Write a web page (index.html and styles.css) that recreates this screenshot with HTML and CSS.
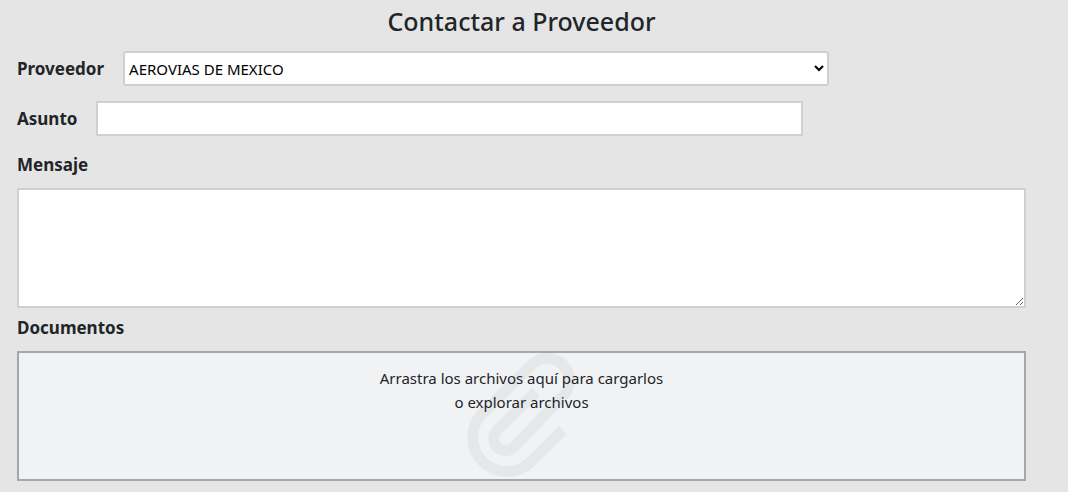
FILE: index.html
```
<!DOCTYPE html>
<html lang="es">
<head>
<meta charset="utf-8">
<meta name="viewport" content="width=device-width, initial-scale=1">
<title>Contactar a Proveedor</title>
<link rel="stylesheet" href="styles.css">
</head>
<body>
<form class="contact">
  <h1 class="title">Contactar a Proveedor</h1>
  <div class="row">
    <label class="label" for="supplier">Proveedor</label>
    <select class="control select" id="supplier"><option>AEROVIAS DE MEXICO</option></select>
  </div>
  <div class="row">
    <label class="label" for="subject">Asunto</label>
    <input class="control" id="subject" type="text">
  </div>
  <div class="block">
    <label class="label" for="message">Mensaje</label>
    <textarea class="message" id="message"></textarea>
  </div>
  <div class="block">
    <label class="label" for="files">Documentos</label>
    <div class="dropzone">
      <svg class="clip" viewBox="0 0 112 126" aria-hidden="true">
        <path d="M97 77 63.500 110A34.200 34.200 0 0 1 15 62L65.500 12A21.800 21.800 0 0 1 97 43L48 94A11.700 11.700 0 0 1 31 77.500L70 39" fill="none" stroke="#e6e7e9" stroke-width="11"/>
      </svg>
      <span class="hint">Arrastra los archivos aquí para cargarlos<br>o explorar archivos</span>
      <input class="file" id="files" type="file" multiple>
    </div>
  </div>
</form>
</body>
</html>
```
FILE: styles.css
```
* { box-sizing: border-box; }
body { margin: 0; background: #e5e5e5; color: #212529; font: 15px/24px "Noto Sans", "Open Sans", sans-serif; }
.contact { display: flex; flex-direction: column; margin: 0 42px 0 17px; padding-top: 7px; }
.title { margin: 0 0 16px; font-size: 25px; line-height: 28px; font-weight: 500; text-align: center; }
.row { display: flex; align-items: center; gap: 19px; margin-bottom: 15px; }
.label { font-size: 17px; line-height: 26px; font-weight: 700; }
.control { width: 70%; height: 35px; border: 2px solid #d0d0d0; border-radius: 0; background: #fff; color: #000; font: inherit; padding: 0 4px; }
.select { border-radius: 3px; padding: 0; }
.block { display: flex; flex-direction: column; gap: 10px; padding: 1px 0 6px; }
.message { height: 120px; border: 2px solid #d0d0d0; background: #fff; resize: vertical; font: inherit; }
.dropzone { position: relative; height: 130px; border: 2px solid #a6a8a8; background: #f1f2f4; text-align: center; padding-top: 13px; }
.clip { position: absolute; top: 0; left: 50%; height: 100%; transform: translateX(-50%); }
.hint { position: relative; }
.file { position: absolute; inset: 0; opacity: 0; width: 100%; height: 100%; }
```
